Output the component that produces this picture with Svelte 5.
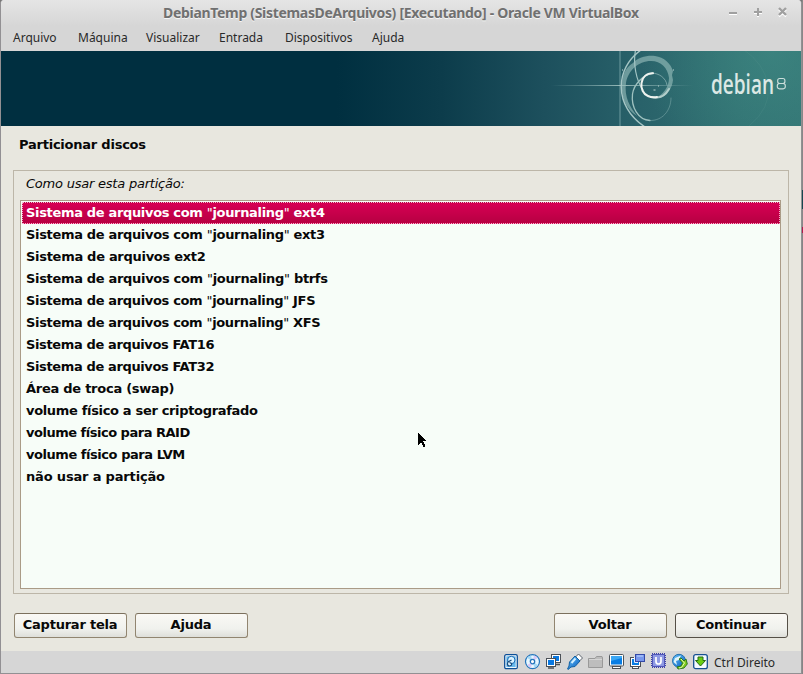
<script>
  const menus = [
    { label: 'Arquivo', width: 65 },
    { label: 'Máquina', width: 68 },
    { label: 'Visualizar', width: 73 },
    { label: 'Entrada', width: 66 },
    { label: 'Dispositivos', width: 87 },
    { label: 'Ajuda', width: 50 }
  ];
  const options = [
    { text: 'Sistema de arquivos com "journaling" ext4', spacing: -0.33 },
    { text: 'Sistema de arquivos com "journaling" ext3', spacing: -0.33 },
    { text: 'Sistema de arquivos ext2', spacing: -0.29 },
    { text: 'Sistema de arquivos com "journaling" btrfs', spacing: -0.32 },
    { text: 'Sistema de arquivos com "journaling" JFS', spacing: -0.34 },
    { text: 'Sistema de arquivos com "journaling" XFS', spacing: -0.34 },
    { text: 'Sistema de arquivos FAT16', spacing: -0.37 },
    { text: 'Sistema de arquivos FAT32', spacing: -0.37 },
    { text: 'Área de troca (swap)', spacing: -0.26 },
    { text: 'volume físico a ser criptografado', spacing: -0.33 },
    { text: 'volume físico para RAID', spacing: -0.49 },
    { text: 'volume físico para LVM', spacing: -0.45 },
    { text: 'não usar a partição', spacing: -0.17 }
  ];
  let selected = $state(0);
</script>

<div class="window">
  <header>
    <h1>DebianTemp (SistemasDeArquivos) [Executando] - Oracle VM VirtualBox</h1>
    <svg class="controls" width="62" height="14" viewBox="0 0 62 14" fill="none">
      <g stroke="#fff" transform="translate(0 1)" stroke-width="2"><path d="M1 7H9M26 6H34M30 2V10M51 2.5L58 9.5M58 2.5L51 9.5" /></g>
      <g stroke="#a0a0a0" stroke-width="2"><path d="M1 7H9M26 6H34M30 2V10" /><path d="M51 2L58 9M58 2L51 9" stroke-width="2.4" /></g>
    </svg>
  </header>
  <nav>
    {#each menus as menu}
      <span style:width="{menu.width}px">{menu.label}</span>
    {/each}
  </nav>

  <svg class="banner" width="800" height="75" viewBox="0 0 800 75">
    <defs>
      <linearGradient id="sea" x1="0" x2="1" y1="0" y2="0">
        <stop offset="0" stop-color="#002f40" />
        <stop offset=".42" stop-color="#002f40" />
        <stop offset=".55" stop-color="#0c3c4b" />
        <stop offset=".68" stop-color="#1d505d" />
        <stop offset=".8" stop-color="#29626a" />
        <stop offset=".92" stop-color="#307071" />
        <stop offset="1" stop-color="#327373" />
      </linearGradient>
      <radialGradient id="light" gradientUnits="userSpaceOnUse" cx="770" cy="0" r="130">
        <stop offset="0" stop-color="#45928a" stop-opacity=".5" />
        <stop offset="1" stop-color="#45928a" stop-opacity="0" />
      </radialGradient>
      <linearGradient id="beam" gradientUnits="userSpaceOnUse" x1="550" x2="692" y1="0" y2="0">
        <stop offset="0" stop-color="#9fc4c2" stop-opacity="0" />
        <stop offset=".5" stop-color="#b5d2cf" stop-opacity=".8" />
        <stop offset="1" stop-color="#9fc4c2" stop-opacity="0" />
      </linearGradient>
    </defs>
    <rect width="800" height="75" fill="url(#sea)" />
    <rect width="800" height="75" fill="url(#light)" />
    <path d="M742 -2Q764 13 767 35T748 75" fill="none" stroke="#5d9c94" stroke-opacity=".2" />
    <path d="M619 0V75" stroke="#6f9da0" stroke-opacity=".65" stroke-width="1.5" />
    <rect x="550" y="34" width="142" height="1" fill="url(#beam)" />
    <path d="M632 12C637 6 647 4 654 5C663 6 670 13 672 20L671 24L672 29C671 37 667 43 660 47L654 47C662 44 668 36 668 27C667 17 660 10 650 10C637 10 627 20 625 32C623 46 629 56 636 65C625 58 620 46 621 34C621 24 625 16 632 12Z" fill="#8fb7b6" fill-opacity=".68" />
    <g fill="none" stroke-linecap="round">
      <path d="M640 -1C614 17 612 55 644 76" stroke="#a5c5c5" stroke-width="1.4" />
      <path d="M634.500 -1C632 13 635 29 642 39" stroke="#a3c5c4" stroke-width="1.2" />
      <path d="M652 22C642 24 633 33 631.500 43C630 56 637 69 649 69.500" stroke="#9fc2c0" stroke-width="1.3" />
      <path d="M649 69.500C661 70 670 60 670 47" stroke="#87b2b1" stroke-opacity=".5" stroke-width="1" />
      <path d="M651 22.200C658 22 665 27 666 34" stroke="#a5c7c4" stroke-width="1" stroke-opacity=".6" />
      <path d="M650 46Q662 49 668 38" stroke="#c3d9d5" stroke-width="2" stroke-opacity=".8" />
      <path d="M652 22.200C638 22 637 41 647 45Q651 47 656 46" stroke="#eef2ee" stroke-width="2" />
    </g>
    <path d="M652.500 39h2M657 35h1M621 19h1M672 19h1" stroke="#c1d6d3" />
    <text class="logo" x="710" y="43" textLength="63" lengthAdjust="spacingAndGlyphs">debian</text>
    <g fill="none" stroke="#cbdedb" stroke-width="1.15"><rect x="776.7" y="27.500" width="7.200" height="5" rx="2" /><rect x="776.3" y="32.500" width="8" height="5.300" rx="2.200" /></g>
  </svg>

  <main>
    <h2>Particionar discos</h2>
    <section>
      <p>Como usar esta partição:</p>
      <ul>
        {#each options as option, i}
          <li class:selected={selected === i} style:letter-spacing="{option.spacing}px"><span onclick={() => (selected = i)} role="presentation">{#each option.text.split(/(")/) as part}{#if part === '"'}<span class="quote">{part}</span>{:else}{part}{/if}{/each}</span></li>
        {/each}
      </ul>
    </section>
    <div class="buttons">
      <button>Capturar tela</button>
      <button>Ajuda</button>
      <button class="back">Voltar</button>
      <button class="primary">Continuar</button>
    </div>
  </main>

  <footer>
    <svg class="tray" width="206" height="18" viewBox="0 0 206 18">
      <defs>
        <linearGradient id="blue" x1="0" x2="1" y1="0" y2="1">
          <stop offset="0" stop-color="#65c4fb" /><stop offset="1" stop-color="#0759bd" />
        </linearGradient>
      </defs>
      <g transform="translate(1 1)">
        <rect x=".7" y=".7" width="12.6" height="14" rx="1.5" fill="#fff" stroke="#0c4f97" stroke-width="1.3" />
        <rect x="2.3" y="2.3" width="9.4" height="10.8" fill="#67b9ed" />
        <circle cx="7.3" cy="6" r="3.7" fill="#dcf3ff" stroke="#176ab3" />
        <path d="M7.5 6L4 8Q2.5 11 5 12Q8 12 7.500 9.500L5.500 8.500" stroke="#164b7f" stroke-width="1.2" fill="#e8f7ff" />
      </g>
      <g transform="translate(22 1)">
        <circle cx="7.5" cy="7.6" r="7" fill="#e8f7ff" stroke="#2475bc" stroke-width="1.2" />
        <path d="M7.5 7.6L2 3.800A7 7 0 0 1 6 1.500ZM7.5 7.600L13 11A7 7 0 0 1 9.500 13.700Z" fill="#a5d9f6" />
        <path d="M7.5 7.600L9 1.600A6 6 0 0 1 12.500 4ZM7.500 7.600L6 13.600A6 6 0 0 1 2.300 11Z" fill="#d8c9f5" />
        <circle cx="7.5" cy="7.6" r="2.2" fill="#fff" stroke="#2475bc" stroke-width="1.3" />
      </g>
      <g transform="translate(43 1)">
        <rect x="5.5" y=".5" width="9" height="8" fill="#fff" stroke="#4b5057" /><rect x="7" y="2" width="6" height="5" fill="#0878e2" /><path d="M10 10.500h4" stroke="#4b5057" stroke-width="1.5" />
        <rect x=".5" y="4.5" width="9" height="8" fill="#fff" stroke="#4b5057" /><rect x="2" y="6" width="6" height="5" fill="#0878e2" /><path d="M2 14h6" stroke="#4b5057" stroke-width="1.5" />
      </g>
      <g transform="translate(64 0)" stroke="#1260a3" stroke-linejoin="round">
        <path d="M8 4.500L11.500 1L15.500 5L12 8.500Z" fill="#fff" stroke="#59616b" />
        <path d="M2.500 9L8 3L13 8L8 13.500L4 14L1 16.500L.500 16L2 13Z" fill="url(#blue)" />
        <path d="M4.500 10L8.500 5.500" stroke="#d4f0ff" stroke-width="2" />
      </g>
      <g transform="translate(85 2)" stroke="#999">
        <path d="M.5 12.5V3.5H7L8.5 1.5H14L14.5 3V12.5Z" fill="#bdbdbd" /><path d="M1 4.5H14" stroke="#d5d5d5" />
      </g>
      <g transform="translate(106 1)">
        <rect x=".5" y=".5" width="14" height="11.5" rx="1" fill="#fff" stroke="#4d535a" /><rect x="2" y="2" width="11" height="8.5" fill="#087de4" /><path d="M2 2H13V4L2 7Z" fill="#3ba7f5" /><rect x="3.500" y="12.500" width="8" height="2" fill="#fff" stroke="#4b5057" />
      </g>
      <g transform="translate(127 1)">
        <rect x=".5" y="3.500" width="10" height="9" fill="#fff" stroke="#4b5057" /><rect x="2" y="5" width="7" height="6" fill="#087de4" /><rect x="2.500" y="12.500" width="6" height="2" fill="#fff" stroke="#4b5057" />
        <rect x="5.500" y=".5" width="9" height="7" fill="#7898ed" stroke="#3349a8" /><path d="M7 2H13" stroke="#bdd5ff" /><path d="M4.500 3V8.500H8" fill="none" stroke="#e7efff" />
      </g>
      <g transform="translate(148 0)">
        <rect x="1" y="1" width="13" height="13" fill="none" stroke="#3d41a9" stroke-width="2" stroke-dasharray="1 1" />
        <rect x="1.500" y="1.500" width="12" height="12" fill="#8e99e4" stroke="#5056b7" />
        <path d="M5 4V8.5Q5 11 7.5 11T10 8.5V4" fill="none" stroke="#fff" stroke-width="1.700" />
      </g>
      <g transform="translate(169 1)">
        <circle cx="7" cy="6.800" r="6.500" fill="url(#blue)" stroke="#2472ae" /><path d="M1.5 8L3 4L9 1.500L7 6L4 7L5 11Z" fill="#e0f4fa" />
        <path d="M7 5L9 4L12 7L14 5L15.300 10L12 14L6 15L5 13L9 12L10.500 9Z" fill="#82cc20" stroke="#2b771c" /><path d="M9 5L12.500 9L9.500 13.500L7 14" fill="none" stroke="#e3fbb4" />
      </g>
      <g transform="translate(190 1)">
        <rect x=".7" y=".7" width="13.6" height="14" rx="2" fill="#f5fbff" stroke="#164f91" stroke-width="1.3" />
        <path d="M5 3H10V6.500H12.5L7.5 12L2.5 6.500H5Z" fill="#69ce12" stroke="#276a15" />
      </g>
    </svg>
    <span>Ctrl Direito</span>
  </footer>

  <svg class="cursor" width="10" height="16" viewBox="0 0 10 16" shape-rendering="crispEdges"><path d="M0 0L8 8H5V9H6V11H7V14H5V12H4V10H3L0 12Z" fill="#000" /></svg>
</div>
<i class="edge"></i>

<style>
  :global(body) { overflow: hidden; background: #777; }
  :global(#app) { display: flex; }
  * { box-sizing: border-box; }
  .window { position: relative; width: 802px; height: 674px; border: solid #929093; border-width: 0 1px 1px; border-radius: 4px 4px 0 0; display: flex; flex-direction: column; background: #d6d6d6; font-family: 'Noto Sans', sans-serif; overflow: hidden; }
  .edge { width: 1px; height: 674px; background: linear-gradient(#888 0 190px, #174750 190px 209px, #888 209px 227px, #b3194d 227px 233px, #858585 233px); }
  header { height: 26px; flex: none; display: flex; align-items: center; padding-left: 162px; background: linear-gradient(#e5e5e5, #d6d6d6); }
  h1 { margin: 0; width: 476px; color: #707070; font-size: 14px; line-height: 20px; font-weight: 700; white-space: nowrap; letter-spacing: -.315px; text-shadow: 0 1px #f5f5f5; }
  .controls { margin-left: 89px; }
  nav { height: 25px; flex: none; display: flex; padding: 3px 12px 0; color: #292929; font-size: 12px; line-height: 18px; }
  .banner { display: block; flex: none; }
  .logo { font: 600 27px 'Open Sans', sans-serif; fill: #dce8e5; }
  main { height: 525px; flex: none; padding: 10px 12px 0; background: #e8e7df; font-family: 'DejaVu Sans', sans-serif; font-size: 13px; color: #080808; display: flex; flex-direction: column; }
  h2 { margin: 0 0 16px 6px; font-size: 13px; line-height: 18px; letter-spacing: -.23px; }
  section { width: 776px; height: 424px; border: 1px solid #bcb6a8; padding: 4px 7px 4px 6px; }
  p { margin: 0 0 8px 6px; font-size: 13px; line-height: 17px; font-style: italic; letter-spacing: -.22px; }
  ul { list-style: none; margin: 0; padding: 1px 0 0 1px; width: 761px; height: 389px; border: 1px solid #aa9b87; background: #f7fdf8; font-weight: 700; }
  li { height: 22px; line-height: 20px; padding: 1px 4px; white-space: pre; }
  li.selected { padding: 0 3px; color: #fff; background: linear-gradient(#d70054, #b70042); border: 1px dotted #f3b6ca; }
  .quote { font-weight: 400; }
  .buttons { display: flex; gap: 8px; padding: 19px 1px 0; }
  button { width: 113px; height: 25px; border: 1px solid #918570; border-top-color: #7b705d; border-radius: 3px; padding: 0 1px 2px 0; background: linear-gradient(#faf9f5, #f0f1ed 65%, #dedfda); font: 700 13px 'DejaVu Sans', sans-serif; letter-spacing: -.22px; color: #080808; }
  .back { margin-left: auto; }
  .primary { border-color: #555047; }
  footer { height: 22px; flex: none; display: flex; padding: 2px 0 0 502px; font-size: 12px; color: #292929; line-height: 20px; }
  footer span { margin-left: 5px; }
  .cursor { position: absolute; left: 417px; top: 433px; }
</style>
